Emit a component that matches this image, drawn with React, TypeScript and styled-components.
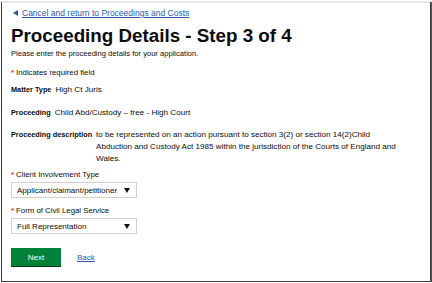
import React from "react";
import styled, { createGlobalStyle } from "styled-components";

const GlobalStyle = createGlobalStyle`
  html, body {
    margin: 0;
    padding: 0;
    background: #fff;
  }
  body {
    font-family: "Liberation Sans", Arial, sans-serif;
    color: #0b0c0c;
  }
`;

const Frame = styled.div`
  box-sizing: border-box;
  width: 430px;
  height: 281px;
  margin: 1px 0 0 1px;
  border: 1px solid #3a3a3a;
  border-top: 2px solid #e6e6e6;
  box-shadow: 1px 1px 0 #555;
  padding: 4px 0 0 9px;
  display: flex;
  flex-direction: column;
`;

const BackLink = styled.a`
  display: flex;
  align-items: center;
  gap: 4px;
  font-size: 8.5px;
  color: #2b5ba8;
  text-decoration: underline;
  height: 12px;
`;

const Arrow = styled.span`
  width: 0;
  height: 0;
  margin-left: 2px;
  border-top: 3px solid transparent;
  border-bottom: 3px solid transparent;
  border-right: 5px solid #2b5ba8;
`;

const Title = styled.h1`
  margin: 7px 0 0;
  font-size: 18.8px;
  font-weight: bold;
  line-height: 20px;
`;

const Lead = styled.p`
  margin: 2px 0 0;
  font-size: 7.6px;
  line-height: 12px;
`;

const Hint = styled.p`
  margin: 7px 0 0;
  font-size: 7.8px;
  line-height: 12px;
`;

const Star = styled.span`
  color: #d4351c;
  font-weight: bold;
  margin-right: 2px;
`;

const Row = styled.div<{ $top: number }>`
  display: grid;
  grid-template-columns: auto 1fr;
  column-gap: 4px;
  margin-top: ${(p) => p.$top}px;
  font-size: 8.1px;
  line-height: 12px;
  padding-right: 30px;
`;

const Key = styled.span`
  font-weight: bold;
  font-size: 7.3px;
`;

const Label = styled.div<{ $top: number }>`
  margin-top: ${(p) => p.$top}px;
  font-size: 7.8px;
  line-height: 12px;
`;

const Select = styled.div`
  box-sizing: border-box;
  width: 126px;
  height: 16px;
  margin-top: 1px;
  border: 1px solid #d0d0d0;
  display: flex;
  align-items: center;
  justify-content: space-between;
  padding: 0 6px 0 5px;
  font-size: 8px;
`;

const Caret = styled.span`
  width: 0;
  height: 0;
  border-left: 3px solid transparent;
  border-right: 3px solid transparent;
  border-top: 5px solid #111;
`;

const Actions = styled.div`
  display: flex;
  align-items: center;
  gap: 16px;
  margin-top: 14px;
`;

const Button = styled.button`
  width: 50px;
  height: 18px;
  border: none;
  background: #00823b;
  box-shadow: 0 1px 0 #003618;
  color: #fff;
  font-family: inherit;
  font-size: 8px;
  padding: 0;
`;

const TextLink = styled.a`
  font-size: 8px;
  color: #2b5ba8;
  text-decoration: underline;
`;

export default function App() {
  return (
    <>
      <GlobalStyle />
      <Frame>
        <BackLink>
          <Arrow />
          Cancel and return to Proceedings and Costs
        </BackLink>
        <Title>Proceeding Details - Step 3 of 4</Title>
        <Lead>Please enter the proceeding details for your application.</Lead>
        <Hint>
          <Star>*</Star>Indicates required field
        </Hint>
        <Row $top={5}>
          <Key>Matter Type</Key>
          <span>High Ct Juris</span>
        </Row>
        <Row $top={11}>
          <Key>Proceeding</Key>
          <span>Child Abd/Custody – free - High Court</span>
        </Row>
        <Row $top={10}>
          <Key>Proceeding description</Key>
          <span>
            to be represented on an action pursuant to section 3(2) or section 14(2)Child
            Abduction and Custody Act 1985 within the jurisdiction of the Courts of England and
            Wales.
          </span>
        </Row>
        <Label $top={4}>
          <Star>*</Star>Client Involvement Type
        </Label>
        <Select>
          Applicant/claimant/petitioner
          <Caret />
        </Select>
        <Label $top={7}>
          <Star>*</Star>Form of Civil Legal Service
        </Label>
        <Select>
          Full Representation
          <Caret />
        </Select>
        <Actions>
          <Button>Next</Button>
          <TextLink>Back</TextLink>
        </Actions>
      </Frame>
    </>
  );
}
